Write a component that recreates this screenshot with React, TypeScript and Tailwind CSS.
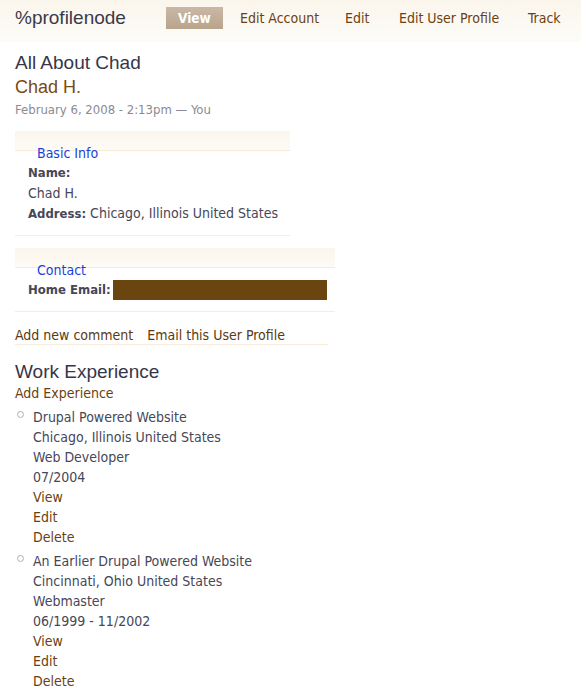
import React from "react";

const body = { fontFamily: "Tahoma, 'DejaVu Sans Condensed', 'DejaVu Sans', sans-serif" };
const arial = { fontFamily: "'Liberation Sans', Arial, sans-serif" };

function Band({ children, width }: { children: React.ReactNode; width: string }) {
  return (
    <div className={`${width}`}>
      <div className="h-[20px] bg-gradient-to-b from-[#fbf6ec] to-[#fdfbf6] border-b border-[#f6ead8]" />
      <div className="-mt-[7px] pl-[22px] text-[#1a3fe0] leading-[18px]">{children}</div>
    </div>
  );
}

export default function App() {
  const jobs = [
    ["Drupal Powered Website", "Chicago, Illinois United States", "Web Developer", "07/2004"],
    ["An Earlier Drupal Powered Website", "Cincinnati, Ohio United States", "Webmaster", "06/1999 - 11/2002"],
  ];
  return (
    <div className="w-[581px] h-[693px] overflow-hidden bg-white text-[14px] text-[#464757]" style={body}>
      <div className="h-[42px] bg-gradient-to-b from-[#fbf6ec] to-[#fdfcf9] flex items-start">
        <div className="pl-[15px] pt-[7px] text-[19px] leading-[22px] text-[#3a3a4a]" style={arial}>%profilenode</div>
        <div className="ml-[40px] pt-[7px] flex items-start text-[#6b3f10]">
          <div className="h-[22px] w-[57px] bg-gradient-to-b from-[#c9b8a6] to-[#b9a48c] text-white font-bold text-[13.5px] flex items-center justify-center">View</div>
          <div className="w-[17px]" />
          <div className="h-[22px] w-[77px] flex items-center whitespace-nowrap">Edit Account</div>
          <div className="w-[28px]" />
          <div className="h-[22px] w-[25px] flex items-center">Edit</div>
          <div className="w-[29px]" />
          <div className="h-[22px] w-[100px] flex items-center whitespace-nowrap">Edit User Profile</div>
          <div className="w-[29px]" />
          <div className="h-[22px] flex items-center">Track</div>
        </div>
      </div>

      <div className="pl-[15px]">
        <div className="mt-[10px] text-[19px] leading-[22px] text-[#36364a]" style={arial}>All About Chad</div>
        <div className="mt-[2px] text-[18px] leading-[22px] text-[#7a4a10]" style={arial}>Chad H.</div>
        <div className="mt-[5px] text-[13px] leading-[14px] text-[#8a8a94]">February 6, 2008 - 2:13pm — You</div>

        <div className="mt-[14px] w-[275px] border-b border-[#f8ecdc] pb-[11px]">
          <Band width="w-[275px]">Basic Info</Band>
          <div className="pl-[13px] leading-[20px] mt-[1px]">
            <div className="font-bold text-[13px]">Name:</div>
            <div>Chad H.</div>
            <div><span className="font-bold text-[13px]">Address:</span> Chicago, Illinois United States</div>
          </div>
        </div>

        <div className="mt-[12px] w-[320px] border-b border-[#f8ecdc] pb-[11px]">
          <Band width="w-[320px]">Contact</Band>
          <div className="pl-[13px] leading-[20px] mt-[1px] flex items-center">
            <span className="font-bold text-[13px]">Home Email:</span>
            <span className="ml-[2px] inline-block w-[214px] h-[20px] bg-[#6b4510]" />
          </div>
        </div>

        <div className="mt-[14px] w-[313px] border-b border-[#f8ecdc] leading-[18px] text-[#5a3a10] flex">
          <span>Add new comment</span>
          <span className="ml-[14px]">Email this User Profile</span>
        </div>

        <div className="mt-[16px] text-[19px] leading-[22px] text-[#36364a]" style={arial}>Work Experience</div>
        <div className="mt-[1px] leading-[18px] text-[#6b3f10]">Add Experience</div>

        <div className="mt-[5px]">
          {jobs.map((j, i) => (
            <div key={i} className="flex mb-[4px]">
              <div className="w-[18px] pt-[4px] pl-[2px]">
                <div className="w-[7px] h-[7px] rounded-full border border-[#b0b0b0]" />
              </div>
              <div className="leading-[20px]">
                {j.map((t, k) => (
                  <div key={k}>{t}</div>
                ))}
                <div className="text-[#6b3f10]">View</div>
                <div className="text-[#6b3f10]">Edit</div>
                <div className="text-[#6b3f10]">Delete</div>
              </div>
            </div>
          ))}
        </div>
      </div>
    </div>
  );
}
